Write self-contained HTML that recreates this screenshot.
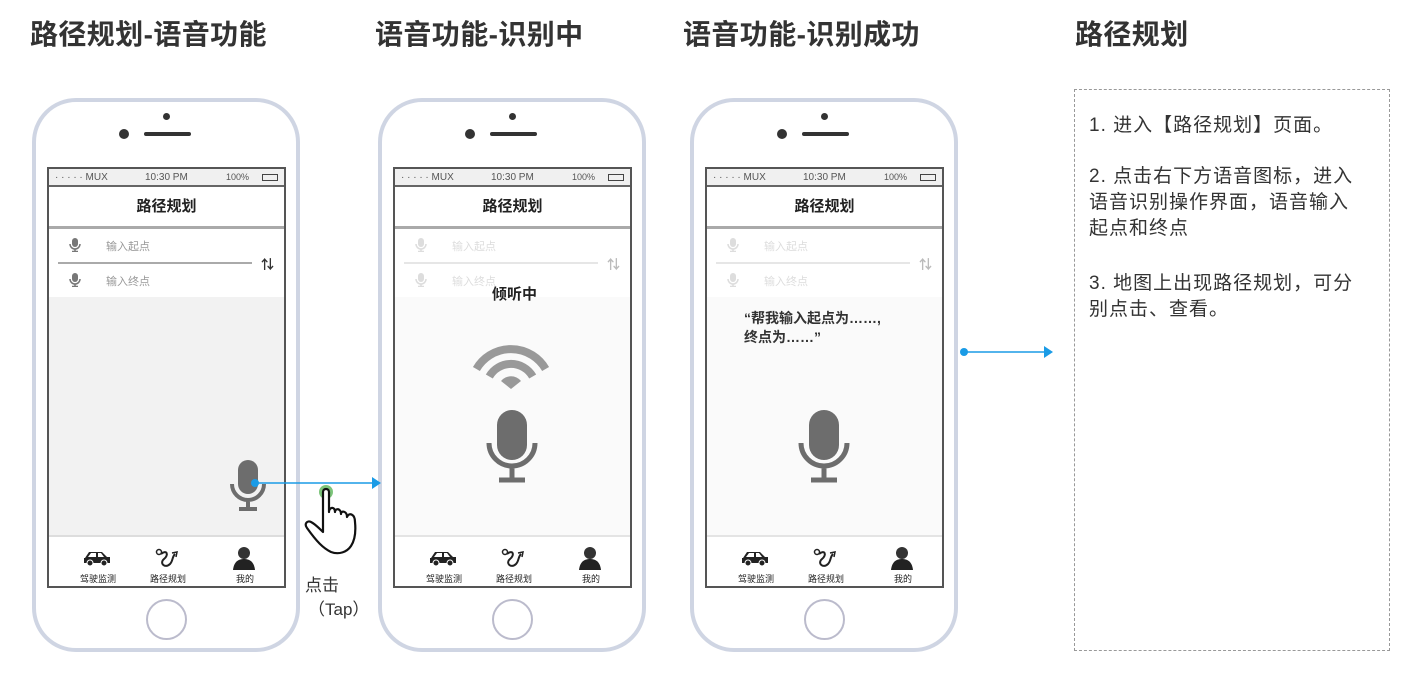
<!DOCTYPE html>
<html><head><meta charset="utf-8"><style>
*{margin:0;padding:0;box-sizing:border-box}
body{width:1410px;height:676px;background:#fff;position:relative;overflow:hidden;font-family:"Liberation Sans","Noto Sans CJK SC",sans-serif;color:#333}
.t{position:absolute;top:13px;font-size:28px;font-weight:bold;color:#333;letter-spacing:0.4px}
.ph{position:absolute;top:98px;width:268px;height:554px}
.shell{position:absolute;left:0;top:0;width:268px;height:554px;border:4px solid #cfd5e3;border-radius:44px;background:#fff}
.a{position:absolute}
.scr{position:absolute;left:15px;top:69px;width:239px;height:421px;border:2px solid #555;background:#fff;overflow:hidden}
.sb{position:absolute;left:0;top:0;width:100%;height:18px;background:#f0f0f0;border-bottom:2px solid #666;font-size:10px;color:#555}
.hd{position:absolute;left:0;top:18px;width:100%;height:42px;border-bottom:3px solid #aaa;text-align:center;line-height:40px;font-size:15px;font-weight:bold;color:#222}
.in{position:absolute;left:0;top:61px;width:100%;height:67px;background:#fff}
.body{position:absolute;left:0;top:128px;width:100%;height:240px;background:#f2f2f2;border-bottom:2px solid #ddd}
.tb{position:absolute;left:0;top:368px;width:100%;height:53px;background:#fff;font-size:9px;color:#222}
.tb span{position:absolute;top:35px;width:60px;text-align:center}
</style></head><body>
<div class="t" style="left:30px">路径规划-语音功能</div>
<div class="t" style="left:375px">语音功能-识别中</div>
<div class="t" style="left:683px">语音功能-识别成功</div>
<div class="t" style="left:1075px">路径规划</div>

<div class="ph" style="left:32px">
<div class="shell"></div>
<div class="a" style="left:131px;top:15px;width:7px;height:7px;border-radius:50%;background:#333"></div>
<div class="a" style="left:87px;top:31px;width:10px;height:10px;border-radius:50%;background:#333"></div>
<div class="a" style="left:112px;top:34px;width:47px;height:4px;border-radius:2px;background:#333"></div>
<div class="a" style="left:114px;top:501px;width:41px;height:41px;border-radius:50%;border:2px solid #bbc"></div>
<div class="scr">
<div class="sb"><span class="a" style="left:6px;top:3px">· · · · · MUX</span><span class="a" style="left:96px;top:3px">10:30 PM</span><span class="a" style="left:177px;top:3px;font-size:9px">100%</span><span class="a" style="left:213px;top:5px;width:16px;height:7px;border:1.5px solid #444"></span></div>
<div class="hd">路径规划</div>
<div class="in">
<svg class="a" style="left:20px;top:8px" width="12" height="14" viewBox="0 0 12 14"><rect x="3" y="0" width="6" height="9" rx="3" fill="#777"/><path d="M1 6a5 5 0 0 0 10 0M6 11v3M3 13.5h6" stroke="#777" fill="none" stroke-width="1.5"/></svg>
<span class="a" style="left:57px;top:8px;font-size:11px;color:#999">输入起点</span>
<div class="a" style="left:9px;top:32px;width:194px;height:2px;background:#aaa"></div>
<span class="a" style="left:212px;top:24px;font-size:13px;font-weight:bold;color:#333">⇅</span>
<svg class="a" style="left:20px;top:43px" width="12" height="14" viewBox="0 0 12 14"><rect x="3" y="0" width="6" height="9" rx="3" fill="#777"/><path d="M1 6a5 5 0 0 0 10 0M6 11v3M3 13.5h6" stroke="#777" fill="none" stroke-width="1.5"/></svg>
<span class="a" style="left:57px;top:43px;font-size:11px;color:#999">输入终点</span>
</div>
<div class="body">
<svg class="a" style="left:180px;top:163px" width="38" height="51" viewBox="0 0 38 51"><rect x="9" y="0" width="20" height="34" rx="10" fill="#6d6d6d"/><path d="M3 24a16 16 0 0 0 32 0M19 40v9M10 49h18" stroke="#6d6d6d" fill="none" stroke-width="4"/></svg>
</div>
<div class="tb">
<svg class="a" style="left:34px;top:13px" width="28" height="16" viewBox="0 0 28 16"><path d="M2 8 L6 2 H19 L24 7 H27 V13 H1 V8Z" fill="#222"/><circle cx="7" cy="13" r="3" fill="#222" stroke="#fff"/><circle cx="21" cy="13" r="3" fill="#222" stroke="#fff"/><path d="M8 3h5v4H5z M15 3h3l3 4h-6z" fill="#fff"/></svg>
<svg class="a" style="left:106px;top:10px" width="24" height="22" viewBox="0 0 24 22"><circle cx="4" cy="5" r="2.5" fill="none" stroke="#222" stroke-width="1.5"/><path d="M6 7 C12 2 14 8 9 12 C4 16 10 22 15 17 C18 14 17 10 20 7" fill="none" stroke="#222" stroke-width="2"/><path d="M17 6 L22 5 L21 10" fill="none" stroke="#222" stroke-width="1.5"/></svg>
<svg class="a" style="left:184px;top:9px" width="22" height="24" viewBox="0 0 22 24"><circle cx="11" cy="7" r="6" fill="#333"/><path d="M0 24 C1 15 6 13 11 13 C16 13 21 15 22 24Z" fill="#222"/></svg>
<span style="left:19px">驾驶监测</span><span style="left:89px">路径规划</span><span style="left:166px">我的</span>
</div>
</div>
</div>

<div class="ph" style="left:378px">
<div class="shell"></div>
<div class="a" style="left:131px;top:15px;width:7px;height:7px;border-radius:50%;background:#333"></div>
<div class="a" style="left:87px;top:31px;width:10px;height:10px;border-radius:50%;background:#333"></div>
<div class="a" style="left:112px;top:34px;width:47px;height:4px;border-radius:2px;background:#333"></div>
<div class="a" style="left:114px;top:501px;width:41px;height:41px;border-radius:50%;border:2px solid #bbc"></div>
<div class="scr">
<div class="sb"><span class="a" style="left:6px;top:3px">· · · · · MUX</span><span class="a" style="left:96px;top:3px">10:30 PM</span><span class="a" style="left:177px;top:3px;font-size:9px">100%</span><span class="a" style="left:213px;top:5px;width:16px;height:7px;border:1.5px solid #444"></span></div>
<div class="hd">路径规划</div>
<div class="in">
<svg class="a" style="left:20px;top:8px" width="12" height="14" viewBox="0 0 12 14"><rect x="3" y="0" width="6" height="9" rx="3" fill="#ddd"/><path d="M1 6a5 5 0 0 0 10 0M6 11v3M3 13.5h6" stroke="#ddd" fill="none" stroke-width="1.5"/></svg>
<span class="a" style="left:57px;top:8px;font-size:11px;color:#ddd">输入起点</span>
<div class="a" style="left:9px;top:32px;width:194px;height:2px;background:#e6e6e6"></div>
<span class="a" style="left:212px;top:24px;font-size:13px;font-weight:bold;color:#bbb">⇅</span>
<svg class="a" style="left:20px;top:43px" width="12" height="14" viewBox="0 0 12 14"><rect x="3" y="0" width="6" height="9" rx="3" fill="#ddd"/><path d="M1 6a5 5 0 0 0 10 0M6 11v3M3 13.5h6" stroke="#ddd" fill="none" stroke-width="1.5"/></svg>
<span class="a" style="left:57px;top:43px;font-size:11px;color:#ddd">输入终点</span>
</div>
<div class="body" style="background:#fafafa;border-bottom-color:#e4e4e4">
<svg class="a" style="left:75px;top:46px" width="82" height="48" viewBox="0 0 82 48"><path d="M6.4 26 A40 40 0 0 1 75.6 26" stroke="#999" stroke-width="8" fill="none"/><path d="M19.3 33.5 A25 25 0 0 1 62.7 33.5" stroke="#999" stroke-width="8" fill="none"/><path d="M41 46 L31 38 A13 13 0 0 1 51 38 Z" fill="#999"/></svg>
<svg class="a" style="left:90px;top:113px" width="54" height="73" viewBox="0 0 54 73"><rect x="12" y="0" width="30" height="50" rx="15" fill="#6d6d6d"/><path d="M4 33a23 23 0 0 0 46 0M27 57v12M14 70h26" stroke="#6d6d6d" fill="none" stroke-width="5"/></svg>
</div>
<div class="a" style="left:0;top:114px;width:100%;text-align:center;font-size:15px;font-weight:bold;color:#222;padding-left:4px">倾听中</div>
<div class="tb">
<svg class="a" style="left:34px;top:13px" width="28" height="16" viewBox="0 0 28 16"><path d="M2 8 L6 2 H19 L24 7 H27 V13 H1 V8Z" fill="#222"/><circle cx="7" cy="13" r="3" fill="#222" stroke="#fff"/><circle cx="21" cy="13" r="3" fill="#222" stroke="#fff"/><path d="M8 3h5v4H5z M15 3h3l3 4h-6z" fill="#fff"/></svg>
<svg class="a" style="left:106px;top:10px" width="24" height="22" viewBox="0 0 24 22"><circle cx="4" cy="5" r="2.5" fill="none" stroke="#222" stroke-width="1.5"/><path d="M6 7 C12 2 14 8 9 12 C4 16 10 22 15 17 C18 14 17 10 20 7" fill="none" stroke="#222" stroke-width="2"/><path d="M17 6 L22 5 L21 10" fill="none" stroke="#222" stroke-width="1.5"/></svg>
<svg class="a" style="left:184px;top:9px" width="22" height="24" viewBox="0 0 22 24"><circle cx="11" cy="7" r="6" fill="#333"/><path d="M0 24 C1 15 6 13 11 13 C16 13 21 15 22 24Z" fill="#222"/></svg>
<span style="left:19px">驾驶监测</span><span style="left:89px">路径规划</span><span style="left:166px">我的</span>
</div>
</div>
</div>

<div class="ph" style="left:690px">
<div class="shell"></div>
<div class="a" style="left:131px;top:15px;width:7px;height:7px;border-radius:50%;background:#333"></div>
<div class="a" style="left:87px;top:31px;width:10px;height:10px;border-radius:50%;background:#333"></div>
<div class="a" style="left:112px;top:34px;width:47px;height:4px;border-radius:2px;background:#333"></div>
<div class="a" style="left:114px;top:501px;width:41px;height:41px;border-radius:50%;border:2px solid #bbc"></div>
<div class="scr">
<div class="sb"><span class="a" style="left:6px;top:3px">· · · · · MUX</span><span class="a" style="left:96px;top:3px">10:30 PM</span><span class="a" style="left:177px;top:3px;font-size:9px">100%</span><span class="a" style="left:213px;top:5px;width:16px;height:7px;border:1.5px solid #444"></span></div>
<div class="hd">路径规划</div>
<div class="in">
<svg class="a" style="left:20px;top:8px" width="12" height="14" viewBox="0 0 12 14"><rect x="3" y="0" width="6" height="9" rx="3" fill="#ddd"/><path d="M1 6a5 5 0 0 0 10 0M6 11v3M3 13.5h6" stroke="#ddd" fill="none" stroke-width="1.5"/></svg>
<span class="a" style="left:57px;top:8px;font-size:11px;color:#ddd">输入起点</span>
<div class="a" style="left:9px;top:32px;width:194px;height:2px;background:#e6e6e6"></div>
<span class="a" style="left:212px;top:24px;font-size:13px;font-weight:bold;color:#bbb">⇅</span>
<svg class="a" style="left:20px;top:43px" width="12" height="14" viewBox="0 0 12 14"><rect x="3" y="0" width="6" height="9" rx="3" fill="#ddd"/><path d="M1 6a5 5 0 0 0 10 0M6 11v3M3 13.5h6" stroke="#ddd" fill="none" stroke-width="1.5"/></svg>
<span class="a" style="left:57px;top:43px;font-size:11px;color:#ddd">输入终点</span>
</div>
<div class="body" style="background:#fafafa;border-bottom-color:#e4e4e4">
<div class="a" style="left:37px;top:12px;font-size:14px;font-weight:bold;color:#333;line-height:19px">“帮我输入起点为……,<br>终点为……”</div>
<svg class="a" style="left:90px;top:113px" width="54" height="73" viewBox="0 0 54 73"><rect x="12" y="0" width="30" height="50" rx="15" fill="#6d6d6d"/><path d="M4 33a23 23 0 0 0 46 0M27 57v12M14 70h26" stroke="#6d6d6d" fill="none" stroke-width="5"/></svg>
</div>
<div class="tb">
<svg class="a" style="left:34px;top:13px" width="28" height="16" viewBox="0 0 28 16"><path d="M2 8 L6 2 H19 L24 7 H27 V13 H1 V8Z" fill="#222"/><circle cx="7" cy="13" r="3" fill="#222" stroke="#fff"/><circle cx="21" cy="13" r="3" fill="#222" stroke="#fff"/><path d="M8 3h5v4H5z M15 3h3l3 4h-6z" fill="#fff"/></svg>
<svg class="a" style="left:106px;top:10px" width="24" height="22" viewBox="0 0 24 22"><circle cx="4" cy="5" r="2.5" fill="none" stroke="#222" stroke-width="1.5"/><path d="M6 7 C12 2 14 8 9 12 C4 16 10 22 15 17 C18 14 17 10 20 7" fill="none" stroke="#222" stroke-width="2"/><path d="M17 6 L22 5 L21 10" fill="none" stroke="#222" stroke-width="1.5"/></svg>
<svg class="a" style="left:184px;top:9px" width="22" height="24" viewBox="0 0 22 24"><circle cx="11" cy="7" r="6" fill="#333"/><path d="M0 24 C1 15 6 13 11 13 C16 13 21 15 22 24Z" fill="#222"/></svg>
<span style="left:19px">驾驶监测</span><span style="left:89px">路径规划</span><span style="left:166px">我的</span>
</div>
</div>
</div>

<svg class="a" style="left:250px;top:474px" width="135" height="20" viewBox="0 0 135 20"><circle cx="5" cy="9" r="4" fill="#1a9be6"/><path d="M5 9H124" stroke="#1a9be6" stroke-width="1.5"/><path d="M122 3L131 9L122 15Z" fill="#1a9be6"/></svg>
<svg class="a" style="left:958px;top:343px" width="100" height="20" viewBox="0 0 100 20"><circle cx="6" cy="9" r="4" fill="#1a9be6"/><path d="M6 9H88" stroke="#1a9be6" stroke-width="1.5"/><path d="M86 3L95 9L86 15Z" fill="#1a9be6"/></svg>
<svg class="a" style="left:303px;top:482px" width="62" height="74" viewBox="0 0 62 74">
<circle cx="23" cy="10" r="7" fill="#7cc47a"/>
<path d="M20 10 C20 6 26 6 26 10 L26 30 C26 25 32 24 32 30 C32 26 38 26 38 32 C38 28 44 29 44 35 C46 30 52 32 52 40 C53 50 52 58 48 64 C44 70 36 73 28 70 C20 66 14 60 4 46 C1 42 4 38 8 40 C12 42 16 46 20 50 Z" fill="#fff" stroke="#111" stroke-width="2.2" stroke-linejoin="round"/>
</svg>
<div class="a" style="left:305px;top:571px;font-size:17px;color:#333">点击</div>
<div class="a" style="left:308px;top:595px;font-size:17px;color:#333">（Tap）</div>

<div class="a" style="left:1074px;top:89px;width:316px;height:562px;border:1.5px dashed #999"></div>
<div class="a" style="left:1089px;top:113px;width:300px;font-size:19px;letter-spacing:1px;line-height:26px;color:#333;white-space:nowrap">
<p>1. 进入【路径规划】页面。</p><p style="margin-top:25px">2. 点击右下方语音图标，进入<br>语音识别操作界面，语音输入<br>起点和终点</p><p style="margin-top:29px">3. 地图上出现路径规划，可分<br>别点击、查看。</p>
</div>
</body></html>
